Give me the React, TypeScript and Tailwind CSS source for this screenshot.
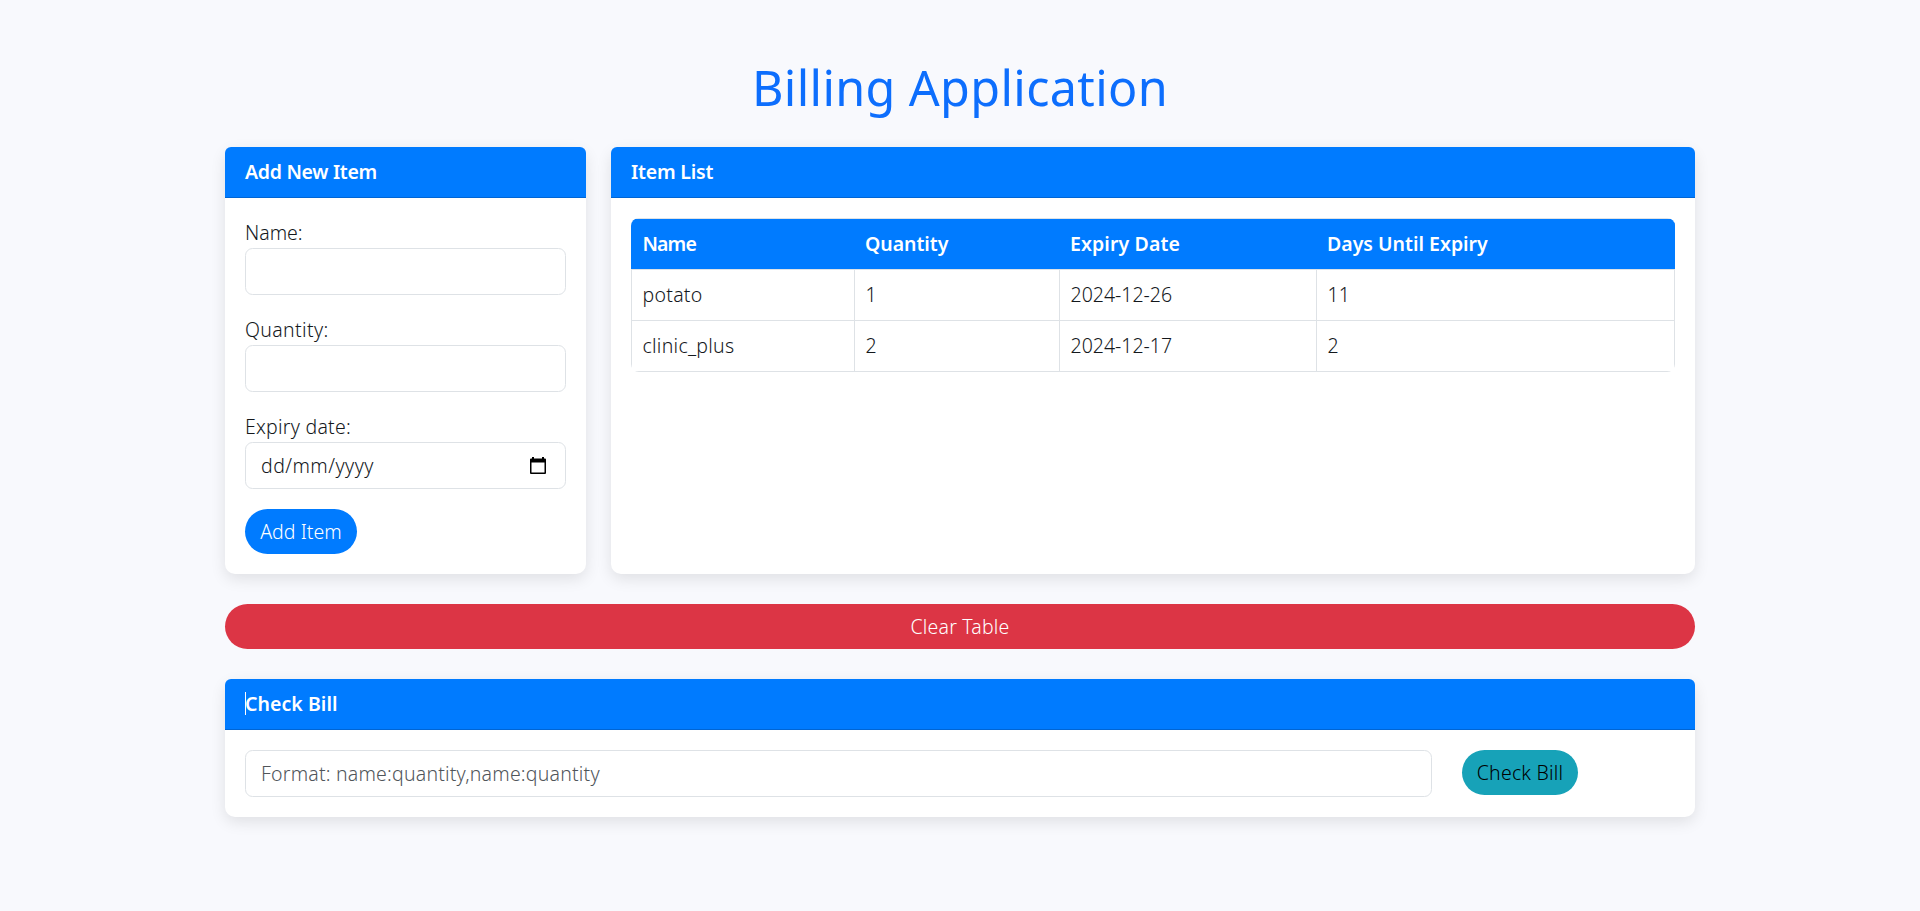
import React from "react";

const fieldClass =
  "block h-[47px] w-full rounded-[7.5px] border border-[#dee2e6] bg-white px-[15px] text-[19.5px] leading-[30px] text-[#14181c] outline-none placeholder:text-[#50555a] placeholder:opacity-100";

function Card({ title, className, caret, children }: { title: React.ReactNode; className?: string; caret?: boolean; children: React.ReactNode }) {
  return (
    <section className={`rounded-[10px] bg-white shadow-[0_5px_15px_rgba(0,0,0,0.1)] ${className ?? ""}`}>
      <header className="relative h-[51px] rounded-t-[6px] border-b border-[#0065d4] bg-[#007bff] px-5 py-[10px] font-semibold leading-[30px] text-white">
        {caret && <span className="absolute left-5 top-[13px] h-[23px] w-px bg-white" />}
        {title}
      </header>
      {children}
    </section>
  );
}

function CalendarIcon() {
  return (
    <svg width="20" height="20" viewBox="0 0 20 20" fill="#000">
      <path d="M4 1h2v1.5h8V1h2v1.5h1q1 0 1 1V17q0 1-1 1H3q-1 0-1-1V3.5q0-1 1-1h1zM3.5 6.5v10h13v-10z" fillRule="evenodd" />
    </svg>
  );
}

const rows = [
  ["potato", "1", "2024-12-26", "11"],
  ["clinic_plus", "2", "2024-12-17", "2"],
];

const columnTracking = ["tracking-[0.27px]", "", "", ""];

export default function App() {
  return (
    <main className="min-h-screen bg-[#f8f9fd] pt-[57px] font-['Noto_Sans',sans-serif] text-[19.5px] font-light leading-[30px] text-[#14181c]">
      <div className="mx-auto w-[1470px]">
        <h1 className="mb-[30px] h-[60px] text-center text-[48.5px] font-normal leading-[60px] text-[#0d6efd]"><span className="tracking-[0.35px]">Billing Application</span></h1>
        <div className="grid grid-cols-[361px_1fr] gap-[25px]">
          <Card title={<span className="tracking-[-0.3px]">Add New Item</span>} className="h-[427px]">
            <form className="flex flex-col items-start gap-5 p-5" onSubmit={(e) => e.preventDefault()}>
              <label className="block w-full"><span>Name:</span><input className={fieldClass} /></label>
              <label className="block w-full"><span className="tracking-[0.35px]">Quantity:</span><input className={fieldClass} /></label>
              <label className="block w-full">
                <span className="tracking-[0.25px]">Expiry date:</span>
                <div className={fieldClass}>
                  <div className="flex h-[45px] items-center justify-between">
                    <span className="tracking-[0.45px]">dd/mm/yyyy</span>
                    <span className="mr-[2px]"><CalendarIcon /></span>
                  </div>
                </div>
              </label>
              <button className="h-[45px] w-[112px] rounded-full bg-[#007bff] text-white"><span className="tracking-[0.05px]">Add Item</span></button>
            </form>
          </Card>
          <Card title={<span className="tracking-[-0.2px]">Item List</span>}>
            <div className="px-[20px] pt-5">
              <div className="overflow-hidden rounded-[8px]">
                <table className="h-[154px] w-[1044px] table-fixed border-collapse text-left">
                  <colgroup>
                    <col className="w-[223px]" /><col className="w-[205px]" /><col className="w-[257px]" /><col />
                  </colgroup>
                  <thead>
                    <tr className="h-[51px] border border-b-[#dee2e6] border-t-[#dee2e6] border-x-[#007bff] bg-[#007bff] text-white">
                      <th className="px-[10.5px] py-0 font-semibold"><span className="tracking-[-0.9px]">Name</span></th>
                      <th className="px-[10.5px] py-0 font-semibold"><span className="tracking-[-0.05px]">Quantity</span></th>
                      <th className="px-[10.5px] py-0 font-semibold"><span className="tracking-[0.12px]">Expiry Date</span></th>
                      <th className="px-[10.5px] py-0 font-semibold"><span>Days Until Expiry</span></th>
                    </tr>
                  </thead>
                  <tbody>
                    {rows.map((row) => (
                      <tr key={row[0]} className="h-[51px]">
                        {row.map((cell, i) => (
                          <td key={i} className="border border-[#dee2e6] px-[10.5px] py-0"><span className={columnTracking[i]}>{cell}</span></td>
                        ))}
                      </tr>
                    ))}
                  </tbody>
                </table>
              </div>
            </div>
          </Card>
        </div>
        <button className="my-[30px] block h-[45px] w-full rounded-full bg-[#dc3545] text-white"><span className="tracking-[0.2px]">Clear Table</span></button>
        <Card title={<span className="tracking-[0.05px]">Check Bill</span>} className="h-[138px]" caret>
          <div className="flex items-start gap-[30px] p-5">
            <div className="w-[1187px]"><input className={`${fieldClass} tracking-[0.2px]`} placeholder="Format: name:quantity,name:quantity" /></div>
            <button className="h-[45px] w-[116px] rounded-full bg-[#17a2b8] text-black"><span className="tracking-[0.2px]">Check Bill</span></button>
          </div>
        </Card>
      </div>
    </main>
  );
}
